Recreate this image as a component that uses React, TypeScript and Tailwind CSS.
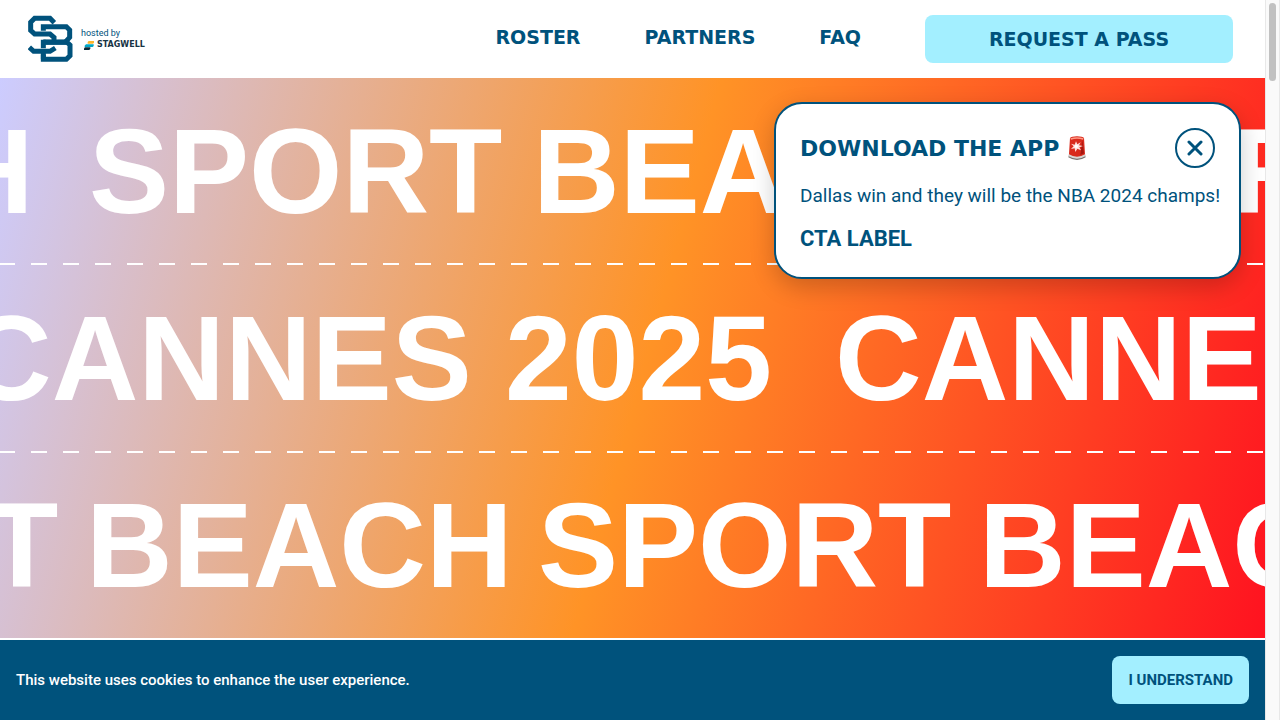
const rows = [
  { lead: "-ml-[393px]", rule: "dashed", words: [["BEACH", "w-[482px]"], ["SPORT", "w-[444px]"], ["BEACH", "w-[446px]"], ["SPORT", "w-[444px]"]] },
  { lead: "-ml-[35px]", rule: "dashed", words: [["CANNES", "w-[540px]"], ["2025", "w-[330px]"], ["CANNES", "w-[540px]"]] },
  { lead: "-ml-[355px]", rule: "solid", words: [["SPORT", "w-[441px]"], ["BEACH", "w-[452px]"], ["SPORT", "w-[441px]"], ["BEACH", "w-[452px]"]] },
];

const rules: Record<string, string> = {
  dashed: "h-0.5 bg-[repeating-linear-gradient(90deg,#fff_0_15px,transparent_15px_31px,#fff_31px_32px)]",
  solid: "h-0.5 bg-white",
};

function Logo() {
  return (
    <a href="#home" aria-label="Sport Beach" className="flex items-center gap-2">
      <svg width="45" height="48" viewBox="0 0 135 144" fill="none" stroke="#00527c" strokeWidth="15">
        <path d="M46 62V35H115L125 45V67L114 79L126 90V122L115 133H46V74" />
        <path d="M46 82H116" />
        <path d="M18 57H66L79 67V74" stroke="#fff" strokeWidth="19" />
        <path d="M20 109H66L84 99" stroke="#fff" strokeWidth="19" />
        <path d="M46 81H116M46 133V113" />
        <path d="M79 23 66 10H20L8 22V46L20 57H66L78 67V80" />
        <path d="M4 97 17 109H66L82 99" />
      </svg>
      <span className="flex flex-col text-[#00527c]">
        <span className="font-['Roboto',sans-serif] text-[9px] leading-3">hosted by</span>
        <span className="flex items-center gap-[3px] pl-[3px]">
          <svg className="shrink-0" width="10" height="9" viewBox="0 0 30 27">
            <path d="M14 0H30V5L27 8H11V3Z" fill="#fdb52a" />
            <path d="M6 10H29V15L26 18H2V14Z" fill="#00a7c8" />
            <path d="M3 19H19V23L16 27H0V22Z" fill="#062b3a" />
          </svg>
          <span className="font-['DejaVu_Sans',sans-serif] text-[8px] leading-3 font-bold text-[#173344]">STAGWELL</span>
        </span>
      </span>
    </a>
  );
}

function Siren() {
  return (
    <svg width="20" height="24" viewBox="0 0 60 72" role="img" aria-label="Siren">
      <path d="M6 56 54 56 56 64Q44 72 30 72T4 64Z" fill="#77716f" />
      <path d="M5 54Q30 64 55 54V61Q44 68 30 68T5 61Z" fill="#d8d5d2" />
      <path d="M9 6Q13 1 30 1T51 6L54 55Q43 62 30 62T6 55Z" fill="#d92a1c" />
      <path d="M10 7Q30 0 50 7L48 11Q30 6 12 11Z" fill="#ff9a86" />
      <path d="M46 12 51 52 40 57Z" fill="#a51710" />
      <path d="M27 16 31 25 41 19 36 28 48 30 37 34 42 43 31 38 25 48 23 37 12 39 20 31 12 23 23 26Z" fill="#ffe0dc" />
      <circle cx="28" cy="31" r="5" fill="#fff" />
    </svg>
  );
}

export default function App() {
  return (
    <div className="flex min-h-screen bg-white text-[#00527c]">
      <div className="flex min-w-0 flex-1 flex-col">
        <header className="flex items-center justify-between py-[15px] pr-8 pl-7">
          <Logo />
          <nav className="flex items-center gap-16 font-['DejaVu_Sans',sans-serif] text-[19px] font-bold">
            <a href="#roster" className="pb-1">ROSTER</a>
            <a href="#partners" className="pb-1">PARTNERS</a>
            <a href="#faq" className="pb-1">FAQ</a>
            <button className="h-12 w-[308px] rounded-lg bg-[#a3efff]">REQUEST A PASS</button>
          </nav>
        </header>

        <main className="relative grid flex-1 grid-rows-3 overflow-hidden bg-[linear-gradient(105deg,#ccccff_0%,#ff9326_51%,#ff1220_100%)]">
          {rows.map((row, i) => (
            <div key={i} className="flex min-w-0 flex-col overflow-hidden">
              <div className={`flex flex-1 items-center font-['Liberation_Sans',sans-serif] text-[120px] leading-none font-bold text-white ${row.lead}`}>
                {row.words.map(([word, width], j) => (
                  <span key={j} className={`shrink-0 whitespace-nowrap ${width}`}>{word}</span>
                ))}
              </div>
              <div className={rules[row.rule]} />
            </div>
          ))}

          <section className="absolute top-6 right-6 flex w-[467px] flex-col gap-4 rounded-[28px] border-2 border-[#00527c] bg-white p-6 shadow-[0_8px_24px_rgba(0,0,0,0.2)]">
            <div className="flex items-center justify-between">
              <h2 className="flex items-center gap-2 font-['DejaVu_Sans',sans-serif] text-[22px] font-bold">
                DOWNLOAD THE APP <Siren />
              </h2>
              <button aria-label="Close" className="flex size-10 items-center justify-center rounded-full border-2 border-[#00527c]">
                <svg width="16" height="16" viewBox="0 0 16 16" stroke="currentColor" strokeWidth="3" strokeLinecap="round">
                  <path d="M2 2 14 14M14 2 2 14" />
                </svg>
              </button>
            </div>
            <p className="font-['Roboto',sans-serif] text-[19px] leading-6 whitespace-nowrap">Dallas win and they will be the NBA 2024 champs!</p>
            <a href="#cta" className="self-start font-['Roboto',sans-serif] text-[22px] leading-[29px] font-bold">CTA LABEL</a>
          </section>
        </main>

        <footer className="flex items-center justify-between bg-[#00527c] p-4 font-['Roboto',sans-serif] text-[15px]">
          <p className="font-medium text-white">This website uses cookies to enhance the user experience.</p>
          <button className="h-12 rounded-lg bg-[#a3efff] px-4 font-bold">I UNDERSTAND</button>
        </footer>
      </div>
      <div aria-hidden="true" className="w-[15px] shrink-0 border-x border-[#e8e8e8] bg-[#fafafa] px-[3px] pt-[3px]">
        <div className="h-[78px] rounded-full bg-[#c1c1c1]" />
      </div>
    </div>
  );
}
